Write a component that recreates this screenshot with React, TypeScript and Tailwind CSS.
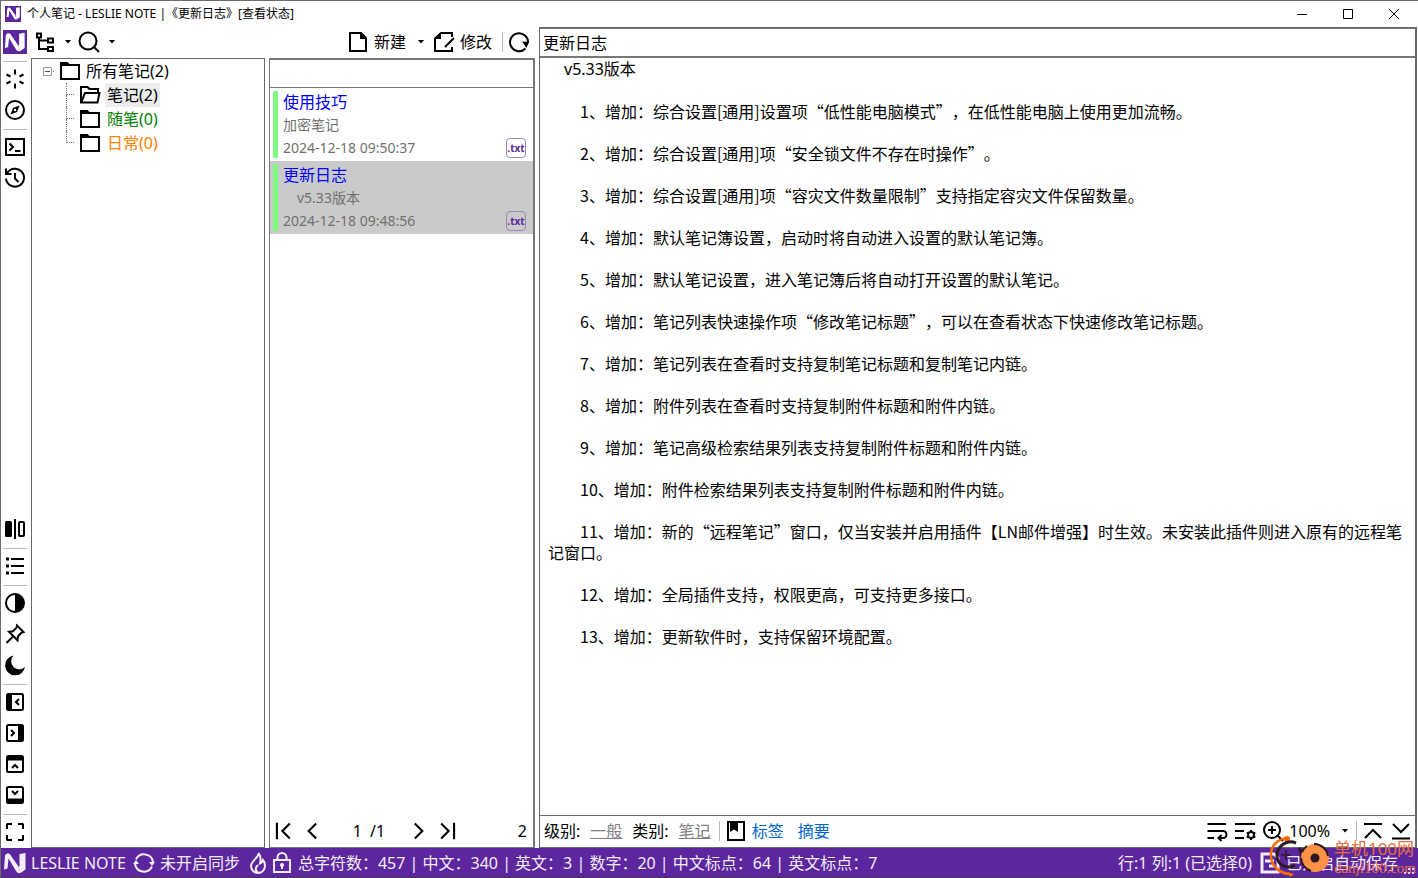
import { useState } from "react";
import type { ReactNode } from "react";

type IconProps = { children: ReactNode; className?: string };

const Icon = ({ children, className = "size-6" }: IconProps) => (
  <svg
    viewBox="0 0 24 24"
    className={`shrink-0 ${className}`}
    fill="none"
    stroke="currentColor"
    strokeWidth="2"
    aria-hidden="true"
  >
    {children}
  </svg>
);

const LogoShape = () => (
  <>
    <path
      d="M1 18.500L2 4.500C3.500 2 6 2 7.500 4L15.500 15.500 17.500 22C15.500 22.500 14 21.500 13 20L5.500 7.500 4.500 17.500z"
      fill="currentColor"
      stroke="none"
    />
    <path d="M16.500 3l6-1v16.500L17.500 22l-2-6.500h1z" fill="currentColor" stroke="none" />
  </>
);

const Logo = ({ className = "size-6" }: { className?: string }) => (
  <span className={`flex shrink-0 items-center justify-center bg-[#5c269e] text-white ${className}`}>
    <Icon className="size-11/12">
      <LogoShape />
    </Icon>
  </span>
);

const Caret = () => (
  <svg viewBox="0 0 6 4" className="h-1 w-1.5 shrink-0" aria-hidden="true">
    <path d="M0 0h6L3 3.500z" fill="currentColor" />
  </svg>
);

const Folder = () => (
  <Icon>
    <path d="M3 5V20H21V6H3z" />
    <path d="M2 3h7.500l2 2H22v2H2z" fill="currentColor" stroke="none" />
  </Icon>
);

const FolderOpen = () => (
  <Icon>
    <path d="M20 10V6h-8.500l-2-2H3v15.500h16.500l2-9.500H7L3.500 19" />
  </Icon>
);

const Refresh = () => (
  <Icon>
    <path d="M18.500 18.500A9 9 0 1 1 21 13" />
    <path d="M15 11.500l7 .5-2.500 6z" fill="currentColor" stroke="none" />
  </Icon>
);

const topTools = [
  {
    name: "快捷操作",
    icon: (
      <Icon>
        <path d="M12 2.500v5M12 16.500v5M3.500 7.500l4 2M16.500 14.500l4 2M3.500 16.500l4-2M16.500 9.500l4-2" />
      </Icon>
    ),
  },
  {
    name: "导航",
    icon: (
      <Icon>
        <circle cx="12" cy="12" r="9" />
        <path d="M16.500 7.500l-2.500 6.500-6.500 2.500 2.500-6.500z" fill="currentColor" stroke="none" />
        <circle cx="12" cy="12" r="1.200" fill="white" stroke="none" />
      </Icon>
    ),
  },
];

const consoleTools = [
  {
    name: "终端",
    icon: (
      <Icon>
        <path d="M3 4h18v16H3z" />
        <path d="M6.500 8.500L10 12l-3.500 3.500M12 16h5.500" />
      </Icon>
    ),
  },
  {
    name: "历史",
    icon: (
      <Icon>
        <path d="M4 7.500A9 9 0 1 1 3 12.500M3 2.500V8h5.500M12 7v5.500l3.500 3.500" />
      </Icon>
    ),
  },
];

const splitTool = {
  name: "分栏",
  icon: (
    <Icon>
      <rect x="2" y="4" width="7" height="16" rx="1.500" fill="currentColor" stroke="none" />
      <path d="M12 2v20" />
      <rect x="16" y="5" width="5" height="14" rx="1" />
    </Icon>
  ),
};

const outlineTool = {
  name: "大纲",
  icon: (
    <Icon>
      <path d="M8 5h13M8 12h13M8 19h13" />
      <path d="M4.500 3.500v3M4.500 10.500v3M4.500 17.500v3" strokeWidth="3" />
    </Icon>
  ),
};

const viewTools = [
  {
    name: "对比度",
    icon: (
      <Icon>
        <circle cx="12" cy="12" r="9" />
        <path d="M12 3a9 9 0 0 1 0 18z" fill="currentColor" stroke="none" />
      </Icon>
    ),
  },
  {
    name: "置顶",
    icon: (
      <Icon>
        <path d="M14 3.500l6.500 6.500-2 .7-3.500 3.600-.5 4L6 9.700l4-.5 3.500-3.600zM10 14.500L3.500 21" />
      </Icon>
    ),
  },
  {
    name: "夜间模式",
    icon: (
      <Icon>
        <path
          d="M10.500 2.500A8 8 0 0 0 22 14 10 10 0 1 1 10.500 2.500z"
          fill="currentColor"
          stroke="none"
        />
      </Icon>
    ),
  },
];

const panelTools = [
  {
    name: "左侧栏",
    icon: (
      <Icon>
        <rect x="4" y="4" width="16" height="16" rx="1.500" />
        <path d="M4 4h5v16H4z" fill="currentColor" stroke="none" />
        <path d="M16 9l-3 3 3 3" />
      </Icon>
    ),
  },
  {
    name: "右侧栏",
    icon: (
      <Icon>
        <rect x="4" y="4" width="16" height="16" rx="1.500" />
        <path d="M15 4h5v16h-5z" fill="currentColor" stroke="none" />
        <path d="M8 9l3 3-3 3" />
      </Icon>
    ),
  },
  {
    name: "顶栏",
    icon: (
      <Icon>
        <rect x="4" y="4" width="16" height="16" rx="1.500" />
        <path d="M4 4h16v4.500H4z" fill="currentColor" stroke="none" />
        <path d="M9 16l3-3 3 3" />
      </Icon>
    ),
  },
  {
    name: "底栏",
    icon: (
      <Icon>
        <rect x="4" y="4" width="16" height="16" rx="1.500" />
        <path d="M4 15.500h16V20H4z" fill="currentColor" stroke="none" />
        <path d="M9 8l3 3 3-3" />
      </Icon>
    ),
  },
];

const fullscreenTool = {
  name: "全屏",
  icon: (
    <Icon>
      <path d="M4 9V4.500L4.500 4H9M15 4h4.500l.5.500V9M20 15v4.500l-.5.500H15M9 20H4.500l-.5-.5V15" />
    </Icon>
  ),
};

type Tool = { name: string; icon: ReactNode };

const RailButton = ({ tool }: { tool: Tool }) => (
  <button type="button" aria-label={tool.name} className="flex h-[31px] w-full items-center justify-center pb-px">
    {tool.icon}
  </button>
);

const RailLine = () => (
  <div className="flex h-1.5 items-center px-0.5">
    <div className="h-px w-full bg-[#b8b8b8]" />
  </div>
);

const Rail = () => (
  <nav className="flex w-[30px] shrink-0 flex-col pr-0.5">
    <RailButton tool={{ name: "主菜单", icon: <Logo /> }} />
    <RailLine />
    {topTools.map((tool) => (
      <RailButton key={tool.name} tool={tool} />
    ))}
    <RailLine />
    {consoleTools.map((tool) => (
      <RailButton key={tool.name} tool={tool} />
    ))}
    <div className="flex-1" />
    <RailButton tool={splitTool} />
    <RailLine />
    <RailButton tool={outlineTool} />
    <RailLine />
    {viewTools.map((tool) => (
      <RailButton key={tool.name} tool={tool} />
    ))}
    <RailLine />
    {panelTools.map((tool) => (
      <RailButton key={tool.name} tool={tool} />
    ))}
    <RailLine />
    <RailButton tool={fullscreenTool} />
  </nav>
);

const TitleBar = () => (
  <header className="flex h-[26px] shrink-0 items-center pr-px pb-px pl-1 text-xs">
    <Logo className="size-4" />
    <h1 className="ml-1.5 flex-1 whitespace-nowrap">个人笔记 - LESLIE NOTE |《更新日志》[查看状态]</h1>
    <button type="button" aria-label="最小化" className="flex h-full w-[46px] items-center justify-center">
      <svg viewBox="0 0 10 10" className="size-2.5" stroke="currentColor">
        <path d="M0 5.500h10" />
      </svg>
    </button>
    <button type="button" aria-label="最大化" className="flex h-full w-[46px] items-center justify-center">
      <svg viewBox="0 0 10 10" className="size-2.5" stroke="currentColor" fill="none">
        <path d="M.5.500h9v9h-9z" />
      </svg>
    </button>
    <button type="button" aria-label="关闭" className="flex h-full w-[46px] items-center justify-center">
      <svg viewBox="0 0 10 10" className="size-2.5" stroke="currentColor">
        <path d="M0 0l10 10M10 0L0 10" />
      </svg>
    </button>
  </header>
);

const Toolbar = () => (
  <div className="flex h-[31px] shrink-0 items-center pb-px pl-0.5">
    <button type="button" aria-label="目录结构" className="flex items-center gap-2">
      <Icon>
        <path d="M4 3.500h4v4H4zM15 8.500h5v4h-5zM15 17h5v4h-5zM6 8v11h9M6 10.500h9" />
      </Icon>
      <Caret />
    </button>
    <button type="button" aria-label="搜索" className="ml-1.5 flex items-center gap-2">
      <Icon>
        <circle cx="11" cy="11" r="8.500" />
        <path d="M17 17l5 5" />
      </Icon>
      <Caret />
    </button>
    <div className="flex-1" />
    <button type="button" className="flex items-center gap-1">
      <Icon>
        <path d="M4 3h11l5 5v13H4z" />
        <path d="M14 3l6 6h-6z" fill="currentColor" stroke="none" />
      </Icon>
      新建
    </button>
    <button type="button" aria-label="更多新建" className="ml-3 flex items-center">
      <Caret />
    </button>
    <button type="button" className="ml-2 flex items-center gap-1">
      <Icon>
        <path d="M20 7V3H9L3 8.500V21h17v-4M13 17l9-9" />
        <path d="M9 3v6H3z" fill="currentColor" stroke="none" />
      </Icon>
      修改
    </button>
    <div className="mx-1 ml-2.5 h-5 w-px bg-[#b8b8b8]" />
    <button type="button" aria-label="刷新" className="mr-1">
      <Refresh />
    </button>
  </div>
);

const folders = [
  { name: "笔记(2)", color: "bg-[#eeeeee] text-black", open: true },
  { name: "随笔(0)", color: "text-[#008000]", open: false },
  { name: "日常(0)", color: "text-[#ff8000]", open: false },
];

const FolderTree = () => (
  <section className="w-[234px] shrink-0 border border-[#696969]">
    <div className="flex h-6 items-center pl-[11px]">
      <svg viewBox="0 0 11 9" className="h-[9px] w-[11px]" fill="none">
        <path d="M.5.500h8v8h-8z" stroke="#999" />
        <path d="M2 4.500h5" stroke="#34568b" />
        <path d="M10 4.500h1" stroke="#777" />
      </svg>
      <span className="ml-1">
        <Folder />
      </span>
      <span className="ml-1 leading-6">所有笔记(2)</span>
    </div>
    <ul className="ml-[34px]">
      {folders.map((folder, index) => (
        <li key={folder.name} className="flex h-6 items-center">
          <span className="flex h-full w-2 shrink-0 flex-col">
            <span className="h-3 border-b border-l border-dotted border-[#777]" />
            {index < folders.length - 1 && <span className="h-3 border-l border-dotted border-[#777]" />}
          </span>
          <span className="ml-1">{folder.open ? <FolderOpen /> : <Folder />}</span>
          <span className={`ml-[3px] px-0.5 leading-6 ${folder.color}`}>{folder.name}</span>
        </li>
      ))}
    </ul>
  </section>
);

const notes = [
  { title: "使用技巧", summary: "加密笔记", time: "2024-12-18 09:50:37", indent: false, active: false },
  { title: "更新日志", summary: "v5.33版本", time: "2024-12-18 09:48:56", indent: true, active: true },
];

const NoteList = () => {
  const [keyword, setKeyword] = useState("");
  const [page, setPage] = useState("1");

  return (
    <section className="flex w-[266px] shrink-0 flex-col border border-r-2 border-[#777]">
      <input
        type="text"
        aria-label="搜索笔记"
        value={keyword}
        onChange={(e) => setKeyword(e.target.value)}
        className="h-[29px] w-full border-t border-b border-[#777] px-1 outline-none"
      />
      <ul className="flex-1">
        {notes.map((note) => (
          <li
            key={note.title}
            className={`flex h-[73px] py-[3px] pl-[3px] pr-[7px] ${note.active ? "bg-[#cacaca]" : "bg-white"}`}
          >
            <span className="w-[5px] shrink-0 bg-[#80ff80]" />
            <div className="flex flex-1 flex-col pl-[5px] text-sm text-[#707070]">
              <span className="text-base leading-[22px] text-[#0000ff]">{note.title}</span>
              <span className={`leading-6 ${note.indent ? "pl-3.5" : ""}`}>{note.summary}</span>
              <span className="leading-[22px]">{note.time}</span>
            </div>
            <span className="flex size-5 items-center justify-center self-end rounded-sm border border-[#9b85bd] text-[10px] font-bold text-[#5c269e]">
              .txt
            </span>
          </li>
        ))}
      </ul>
      <div className="flex h-8 shrink-0 items-center px-1 pr-1.5">
        <button type="button" aria-label="首页">
          <Icon className="size-5">
            <path d="M3.500 2v20M19 3l-9 9 9 9" strokeWidth="2.500" />
          </Icon>
        </button>
        <button type="button" aria-label="上一页" className="ml-2">
          <Icon className="size-5">
            <path d="M17 3l-9 9 9 9" strokeWidth="2.500" />
          </Icon>
        </button>
        <input
          type="text"
          aria-label="页码"
          value={page}
          onChange={(e) => setPage(e.target.value)}
          className="ml-4 w-6 text-right outline-none"
        />
        <span className="ml-2">/1</span>
        <button type="button" aria-label="下一页" className="ml-6">
          <Icon className="size-5">
            <path d="M7 3l9 9-9 9" strokeWidth="2.500" />
          </Icon>
        </button>
        <button type="button" aria-label="末页" className="ml-2">
          <Icon className="size-5">
            <path d="M5 3l9 9-9 9M20.500 2v20" strokeWidth="2.500" />
          </Icon>
        </button>
        <span className="ml-auto">2</span>
      </div>
    </section>
  );
};

const changes = [
  "1、增加：综合设置[通用]设置项“低性能电脑模式”，在低性能电脑上使用更加流畅。",
  "2、增加：综合设置[通用]项“安全锁文件不存在时操作”。",
  "3、增加：综合设置[通用]项“容灾文件数量限制”支持指定容灾文件保留数量。",
  "4、增加：默认笔记簿设置，启动时将自动进入设置的默认笔记簿。",
  "5、增加：默认笔记设置，进入笔记簿后将自动打开设置的默认笔记。",
  "6、增加：笔记列表快速操作项“修改笔记标题”，可以在查看状态下快速修改笔记标题。",
  "7、增加：笔记列表在查看时支持复制笔记标题和复制笔记内链。",
  "8、增加：附件列表在查看时支持复制附件标题和附件内链。",
  "9、增加：笔记高级检索结果列表支持复制附件标题和附件内链。",
  "10、增加：附件检索结果列表支持复制附件标题和附件内链。",
  "11、增加：新的“远程笔记”窗口，仅当安装并启用插件【LN邮件增强】时生效。未安装此插件则进入原有的远程笔记窗口。",
  "12、增加：全局插件支持，权限更高，可支持更多接口。",
  "13、增加：更新软件时，支持保留环境配置。",
];

const Editor = () => {
  const [title, setTitle] = useState("更新日志");

  return (
    <main className="mr-px flex min-w-0 flex-1 flex-col border border-r-2 border-[#696969]">
      <input
        type="text"
        aria-label="笔记标题"
        value={title}
        onChange={(e) => setTitle(e.target.value)}
        className="h-[30px] w-full shrink-0 border-t border-b-2 border-[#777] px-[3px] pb-0.5 outline-none"
      />
      <article className="flex flex-1 flex-col gap-[21px] pt-px pr-2 pl-2 leading-[21px]">
        <p className="indent-4">v5.33版本</p>
        {/* The CJK font comes first here so that the curly quotes are full width */}
        {changes.map((change) => (
          <p
            key={change}
            className="indent-8 font-['Noto_Sans_CJK_SC','Noto_Sans',sans-serif] [text-spacing-trim:space-all]"
          >
            {change}
          </p>
        ))}
      </article>
      <footer className="flex h-8 shrink-0 items-center border-t border-[#696969] pr-0.5 pb-px pl-1">
        <span>级别:</span>
        <a href="#level" className="ml-2.5 text-[#808080] underline">
          一般
        </a>
        <span className="ml-2.5">类别:</span>
        <a href="#category" className="ml-2.5 text-[#808080] underline">
          笔记
        </a>
        <div className="mx-1 ml-2 h-5 w-px bg-[#b8b8b8]" />
        <Icon>
          <path d="M4 3h16v18H4z" />
          <path d="M6 4h8v9l-4-2.500L6 13z" fill="currentColor" stroke="none" />
        </Icon>
        <a href="#tags" className="ml-1 text-[#0066cc]">
          标签
        </a>
        <a href="#summary" className="ml-3.5 text-[#0066cc]">
          摘要
        </a>
        <div className="flex-1" />
        <button type="button" aria-label="自动换行">
          <Icon>
            <path d="M2.500 5H21M2.500 12H18a3.500 3.500 0 0 1 0 7h-4M2.500 19H9M16.500 16l-3 3 3 3" />
          </Icon>
        </button>
        <button type="button" aria-label="排版设置" className="ml-1">
          <Icon>
            <path d="M2 5h20M2 12h9M2 19h9" />
            <circle cx="18" cy="16" r="3" />
            <path d="M18 11v2M18 19v2M13.700 13.500l1.700 1M20.600 17.500l1.700 1M13.700 18.500l1.700-1M20.600 14.500l1.700-1" />
          </Icon>
        </button>
        <button type="button" aria-label="缩放" className="ml-1 flex items-center">
          <Icon>
            <circle cx="11" cy="11" r="8" />
            <path d="M17 17l5 5M7 11h8M11 7v8" />
          </Icon>
          <span className="ml-1">100%</span>
          <span className="ml-3">
            <Caret />
          </span>
        </button>
        <div className="mx-1 ml-2 h-5 w-px bg-[#b8b8b8]" />
        <button type="button" aria-label="回到顶部">
          <Icon>
            <path d="M3 5h18M4 19l8-8 8 8" />
          </Icon>
        </button>
        <button type="button" aria-label="跳到底部" className="ml-1">
          <Icon>
            <path d="M4 5l8 8 8-8M3 19.500h18" />
          </Icon>
        </button>
      </footer>
    </main>
  );
};

const Watermark = () => (
  <div className="pointer-events-none absolute right-0 bottom-0 flex items-end text-[#e8703f]">
    <svg viewBox="0 0 66 44" className="h-11 w-[66px]" fill="none" aria-hidden="true">
      <path d="M20 5C8 6 2 14 3 24c1 9 8 16 18 17" stroke="#ff6a00" strokeWidth="2.500" />
      <circle cx="19" cy="6" r="3" fill="#ff6a00" />
      <path d="M19 39l7 2-4 3z" fill="#ff6a00" />
      <path d="M28 10C18 6 8 14 9 24c1 8 10 13 18 8" stroke="#2b1a24" strokeWidth="3" />
      <path d="M18 17v10M13 22h10" stroke="#2b1a24" strokeWidth="1.500" />
      <path d="M31 15c3 3 2 8 4 13" stroke="#2b1a24" strokeWidth="3" />
      <circle cx="47" cy="25" r="14" fill="#ff9147" />
      <path d="M46 11a14 14 0 0 1 14 12M33 25a14 14 0 0 0 10 13M34 19a14 14 0 0 1 5-6" stroke="#2b1a24" strokeWidth="2" />
      <circle cx="47" cy="25" r="4.500" fill="#2b1a24" />
    </svg>
    <div className="flex flex-col pr-0.5">
      <span className="text-[17px] leading-5">单机100网</span>
      <span className="font-['Liberation_Serif',serif] text-[15px] leading-[18px]">danji100.com</span>
    </div>
    <svg viewBox="0 0 10 8" className="absolute right-1 bottom-0.5 h-2 w-2.5" fill="#d9cde8" aria-hidden="true">
      <path d="M0 5h2v2H0zM4 5h2v2H4zM8 5h2v2H8zM8 1h2v2H8zM4 1h2v2H4z" />
    </svg>
  </div>
);

const StatusBar = () => (
  <footer className="relative flex h-[29px] shrink-0 items-center bg-[#5c269e] pl-0.5 whitespace-nowrap text-[#f3edf9]">
    <Icon>
      <LogoShape />
    </Icon>
    <span className="ml-1">LESLIE NOTE</span>
    <span className="ml-1.5">
      <Icon>
        <path d="M4 8.500A9 9 0 0 1 21 11M20 15.500A9 9 0 0 1 3 13" />
        <path d="M17 11h6l-3 4zM7 13H1l3-4z" fill="currentColor" stroke="none" />
      </Icon>
    </span>
    <span className="ml-1">未开启同步</span>
    <span className="ml-1.5">
      <Icon>
        <path d="M12.500 2c1 4-7.500 8-7.500 13a7 7 0 0 0 14 0c0-3-1-5-2-6-.5 2-1.500 3-3 3.500 1-4 .5-8-1.500-10.500zM12 21c-3-1-3-4 0-7" />
      </Icon>
    </span>
    <Icon>
      <path d="M4 9h16v12H4zM7.500 9V6.500a4.500 4.500 0 0 1 9 0V9M12 14v4" />
      <circle cx="12" cy="14" r="2" fill="currentColor" stroke="none" />
    </Icon>
    <span className="ml-1">
      总字符数：457 | 中文：340 | 英文：3 | 数字：20 | 中文标点：64 | 英文标点：7
    </span>
    <span className="ml-auto">行:1 列:1 (已选择0)</span>
    <span className="ml-1.5">
      <Icon>
        <path d="M4 3h12l4 4v14H4z" strokeWidth="3" />
        <path d="M7 10h9M11 15h6" strokeWidth="3" />
      </Icon>
    </span>
    <span className="mr-5 ml-1">已开启自动保存</span>
    <Watermark />
  </footer>
);

const App = () => (
  <div className="flex h-screen flex-col overflow-hidden border-t border-l border-[#6d6d6d] border-b border-b-[#4a3a55] bg-white font-['Noto_Sans','Noto_Sans_CJK_SC',sans-serif] text-base text-black">
    <TitleBar />
    <div className="flex min-h-0 flex-1">
      <Rail />
      <div className="mr-1 flex flex-col">
        <Toolbar />
        <div className="flex flex-1 gap-1">
          <FolderTree />
          <NoteList />
        </div>
      </div>
      <Editor />
    </div>
    <StatusBar />
  </div>
);

export default App;
